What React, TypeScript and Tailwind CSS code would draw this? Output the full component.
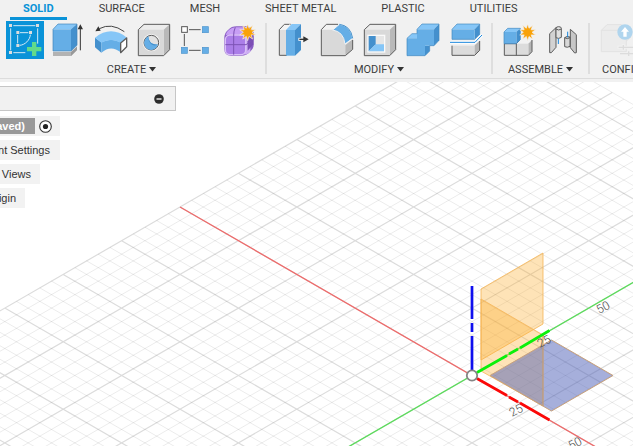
import type { ReactNode } from "react";

const tabs = ["SOLID", "SURFACE", "MESH", "SHEET METAL", "PLASTIC", "UTILITIES"];

const BLUE = "#65aee6";
const BLUE_TOP = "#86c6f7";
const BLUE_SIDE = "#4490cd";
const LINE = "#5c5c5c";

function Icon({ children }: { children: ReactNode }) {
  return (
    <svg viewBox="0 0 114 114" className="size-[38px]" aria-hidden="true">
      {children}
    </svg>
  );
}

function Star() {
  const points = Array.from({ length: 20 }, (_, i) => {
    const r = i % 2 === 0 ? 25 : 13;
    const a = (i * Math.PI) / 10 - Math.PI / 2;
    return `${80 + r * Math.cos(a)},${34 + r * Math.sin(a)}`;
  }).join(" ");
  return <polygon points={points} fill="#f9a209" stroke="#f1f1f1" strokeWidth="2" />;
}

function GrayBox() {
  return (
    <g stroke={LINE} strokeWidth="3" strokeLinejoin="round">
      <path d="M10 26 27 10H104L86 26Z" fill="#ececec" stroke="none" />
      <path d="M86 26 104 10V86L86 104Z" fill="#b9b9b9" stroke="none" />
      <path d="M10 26H86V104H10Z" fill="#d9d9d9" stroke="none" />
      <path d="M10 26 27 10H104V86L86 104H10Z" fill="none" />
    </g>
  );
}

const sketch = (
  <Icon>
    <rect width="114" height="114" fill="#0a93d8" />
    <g fill="none" stroke="#d5eaf6" strokeWidth="3">
      <path d="M22 14H88M14 22V88M95 22V68M22 95H58M42 35H67M35 42V67M73 41C72 57 57 72 41 73" />
    </g>
    <g fill="#dcdcdc">
      <rect x="9" y="9" width="9" height="9" />
      <rect x="90" y="9" width="9" height="9" />
      <rect x="9" y="90" width="9" height="9" />
      <rect x="31" y="30" width="9" height="9" />
      <rect x="69" y="30" width="9" height="9" />
      <rect x="31" y="69" width="9" height="9" />
    </g>
    <path d="M78 63H91V78H106V91H91V105H78V91H63V78H78Z" fill="#62da8b" />
  </Icon>
);

const extrude = (
  <Icon>
    <path d="M12 93H66L84 77V87L66 105H12Z" fill="#b3b3b3" />
    <path d="M66 93 84 77V87L66 105Z" fill="#999" />
    <path d="M12 25 27 9H84L66 25Z" fill={BLUE_TOP} />
    <path d="M66 25 84 9V73L66 90Z" fill={BLUE_SIDE} />
    <path d="M12 25H66V90H12Z" fill={BLUE} />
    <path d="M12 90V25L27 9H84V73L66 90Z" fill="none" stroke="#3f83b9" strokeWidth="2" />
    <path d="M94 20V88" stroke="#333" strokeWidth="3" />
    <path d="M94 10 102 25H86Z" fill="#333" />
  </Icon>
);

const revolve = (
  <Icon>
    <path d="M9 50 28 64V95L9 79Z" fill={BLUE_SIDE} />
    <path d="M28 64Q57 48 86 64V94Q57 70 28 95Z" fill={BLUE} />
    <path d="M9 50Q57 12 105 50L86 65Q57 49 28 65Z" fill={BLUE_TOP} />
    <path d="M86 66 104 51V77L86 95Z" fill="#fff" stroke={LINE} strokeWidth="4" strokeLinejoin="round" />
    <path d="M97 32Q58 4 22 23" fill="none" stroke="#444" strokeWidth="3" />
    <path d="M10 31 19 16 26 29Z" fill="#333" />
  </Icon>
);

const hole = (
  <Icon>
    <GrayBox />
    <circle cx="49" cy="65" r="26" fill="#f4f4f4" />
    <circle cx="49" cy="65" r="22" fill="#e2e2e2" stroke={LINE} strokeWidth="3" />
    <path d="M41 46C40 63 52 73 69 70A21 21 0 1 1 41 46Z" fill={BLUE} />
    <path d="M41 46C40 63 52 73 69 70C57 79 37 68 41 46Z" fill={BLUE_SIDE} />
  </Icon>
);

const pattern = (
  <Icon>
    <path d="M33 26H68M19 39V75M33 88H68" stroke="#555" strokeWidth="3" />
    <rect x="11" y="17" width="17" height="17" fill="#fff" stroke="#555" strokeWidth="3" />
    <g fill={BLUE} stroke="#4b94cd" strokeWidth="2">
      <rect x="73" y="17" width="18" height="18" />
      <rect x="10" y="79" width="18" height="18" />
      <rect x="73" y="79" width="18" height="18" />
    </g>
  </Icon>
);

const form = (
  <Icon>
    <path d="M10 48Q11 35 22 26Q32 15 50 16H78Q98 22 98 42V72Q98 83 87 92Q77 104 60 104H30Q10 104 10 84Z" fill="#8b5fc4" />
    <path d="M14 42Q20 22 44 19H76L88 31Q76 38 70 41H22Z" fill="#c79ef5" />
    <path d="M70 42 88 27V92Q80 100 70 101Z" fill="#cdaef3" />
    <path d="M79 47 97 32V70L80 89Z" fill="#7c4eb5" />
    <rect x="13" y="42" width="61" height="59" rx="14" fill="#ab7ee8" stroke="#d9bff8" strokeWidth="4" />
    <path d="M43 19Q38 30 38 42V101M13 71H75L97 56" fill="none" stroke="#7d54b5" strokeWidth="3" />
    <Star />
  </Icon>
);

const pressPull = (
  <Icon>
    <path d="M13 26H33V103H13Z" fill="#dedede" />
    <path d="M13 26 28 10H46L33 26Z" fill="#f4f4f4" />
    <path d="M36 103H13V26L28 10H48" fill="none" stroke={LINE} strokeWidth="3" />
    <path d="M31 26 47 8" stroke="#f4f4f4" strokeWidth="3" />
    <path d="M33 27 50 9H78L60 27Z" fill={BLUE_TOP} />
    <path d="M60 27 78 9V87L60 104Z" fill={BLUE_SIDE} />
    <path d="M33 27H60V104H33Z" fill={BLUE} />
    <path d="M70 55H92" stroke="#f4f4f4" strokeWidth="9" />
    <path d="M73 55H92" stroke="#333" strokeWidth="4" />
    <path d="M85 46 101 55 85 64Z" fill="#333" />
  </Icon>
);

const fillet = (
  <Icon>
    <path d="M10 26 25 10H62L45 26Z" fill="#f2f2f2" />
    <path d="M10 26H43Q78 30 82 68V104H10Z" fill="#d9d9d9" />
    <path d="M82 72 104 55V84L82 104Z" fill="#b9b9b9" />
    <path d="M60 10H25L10 26V104H82L104 85V57" fill="none" stroke={LINE} strokeWidth="3" />
    <path d="M44 27 64 10Q98 14 104 52L81 69Q77 32 44 27Z" fill={BLUE} stroke="#f2f2f2" strokeWidth="3" />
    <path d="M64 10Q98 14 104 52" fill="none" stroke="#4b94cd" strokeWidth="3" />
  </Icon>
);

const shell = (
  <Icon>
    <GrayBox />
    <rect x="19" y="41" width="54" height="54" fill="#fafafa" />
    <rect x="23" y="45" width="46" height="46" fill="#e6e6e6" />
    <path d="M23 45H44V70L23 91Z" fill={BLUE_SIDE} />
    <path d="M44 70H69V91H23Z" fill={BLUE_TOP} />
  </Icon>
);

const combine = (
  <Icon>
    <path d="M39 25 54 9H105L90 25Z" fill={BLUE_TOP} />
    <path d="M90 25 105 9V58L90 74Z" fill={BLUE_SIDE} />
    <path d="M9 52 24 38H44V52Z" fill={BLUE_TOP} />
    <path d="M63 74H77V90L63 104Z" fill={BLUE_SIDE} />
    <path d="M39 25H90V74H63V104H9V52H39Z" fill={BLUE} />
    <path d="M39 38V25L54 9H105V58L90 74H77V90L63 104H9V52L24 38Z" fill="none" stroke="#4188bf" strokeWidth="2" />
  </Icon>
);

const split = (
  <Icon>
    <path d="M15 74H83V103H15Z" fill="#dcdcdc" />
    <path d="M83 73 98 59V88L83 103Z" fill="#b5b5b5" />
    <path d="M15 74V103H83L98 88V60" fill="none" stroke={LINE} strokeWidth="3" />
    <path d="M15 25 30 9H98L83 25Z" fill={BLUE_TOP} />
    <path d="M83 25 98 9V40L83 55Z" fill={BLUE_SIDE} />
    <path d="M15 25H83V55H15Z" fill={BLUE} />
    <path d="M15 55V25L30 9H98V40L83 55Z" fill="none" stroke="#4188bf" strokeWidth="2" />
    <path d="M9 64H84L105 42" fill="none" stroke="#fff" strokeWidth="8" />
    <path d="M9 64H84L105 42" fill="none" stroke="#1b87dc" strokeWidth="3" />
  </Icon>
);

const newComponent = (
  <Icon>
    <path d="M46 68 57 57H93L82 68Z" fill="#f2f2f2" />
    <path d="M82 68 93 57V92L82 103Z" fill="#b5b5b5" />
    <path d="M10 68H82V103H10Z" fill="#dcdcdc" />
    <path d="M10 68V103H82L93 92V57M46 68V103M10 68H46L55 58" fill="none" stroke={LINE} strokeWidth="3" />
    <path d="M9 33 20 22H58L46 33Z" fill={BLUE_TOP} />
    <path d="M46 33 58 22V56L46 68Z" fill={BLUE_SIDE} />
    <path d="M9 33H46V68H9Z" fill={BLUE} />
    <path d="M9 68V33L20 22H58V56L46 68Z" fill="none" stroke="#4188bf" strokeWidth="2" />
    <Star />
  </Icon>
);

const joint = (
  <Icon>
    <g stroke={LINE} strokeWidth="3" strokeLinejoin="round">
      <path d="M17 38 36 20V79L22 95H17Z" fill="#d2d2d2" />
      <path d="M36 22Q36 17 44 17Q52 17 52 22V49Q44 55 36 50Z" fill="#e0e0e0" />
      <path d="M36 24Q44 30 52 24" fill="none" />
      <path d="M79 45V25L97 41V95L92 96 79 80Z" fill="#c6c6c6" />
      <path d="M62 50Q68 44 78 48V76Q70 81 62 77Z" fill="#d8d8d8" />
      <path d="M62 50Q70 56 78 50" fill="none" />
    </g>
    <path d="M43 53V69M71 32V49" stroke="#1b87dc" strokeWidth="3" />
  </Icon>
);

const configure = (
  <Icon>
    <g fill="#ececec" stroke="#e2e2e2" strokeWidth="3">
      <path d="M10 92V28L27 11H70L85 28V92Z" />
      <path d="M10 28H62M85 60 100 47" />
    </g>
    <path d="M58 79H114M66 98H114M76 70V88M92 89V107" stroke="#f1f1f1" strokeWidth="9" />
    <path d="M62 79H114M66 98H114M76 72V86M92 91V105" stroke="#dcdcdc" strokeWidth="4" />
    <circle cx="81" cy="33" r="23" fill="#b0d5ee" />
    <path d="M81 18 93 32H86V47H76V32H69Z" fill="#fff" />
  </Icon>
);

type Tool = { name: string; icon: ReactNode; disabled?: boolean };

const groups: { label: string; caret: boolean; tools: Tool[] }[] = [
  {
    label: "CREATE",
    caret: true,
    tools: [
      { name: "Create sketch", icon: sketch },
      { name: "Extrude", icon: extrude },
      { name: "Revolve", icon: revolve },
      { name: "Hole", icon: hole },
      { name: "Rectangular pattern", icon: pattern },
      { name: "Create form", icon: form },
    ],
  },
  {
    label: "MODIFY",
    caret: true,
    tools: [
      { name: "Press pull", icon: pressPull },
      { name: "Fillet", icon: fillet },
      { name: "Shell", icon: shell },
      { name: "Combine", icon: combine },
      { name: "Split body", icon: split },
    ],
  },
  {
    label: "ASSEMBLE",
    caret: true,
    tools: [
      { name: "New component", icon: newComponent },
      { name: "Joint", icon: joint },
    ],
  },
  {
    label: "CONFI",
    caret: false,
    tools: [{ name: "Configure", icon: configure, disabled: true }],
  },
];

function Ribbon() {
  return (
    <header className="bg-[#f1f1f1] pb-[3px] font-['Roboto',sans-serif] text-[11px] text-[#3c3c3c]">
      <nav className="flex h-[21px] gap-[19px] pl-[10px]">
        {tabs.map((tab, i) => (
          <button
            key={tab}
            className={
              i === 0
                ? "h-5 border-b-3 border-[#0a93d8] px-[13px] text-[11px] leading-4 font-bold whitespace-nowrap text-[#0a93d8]"
                : "h-5 border-b-3 border-transparent px-[13px] text-[11px] leading-4 whitespace-nowrap"
            }
          >
            {tab}
          </button>
        ))}
      </nav>
      <div className="flex h-[58px] border-b border-[#dcdcdc] pl-1.5">
        {groups.map((group, i) => (
          <div key={group.label} className="flex shrink-0">
            <div className="flex flex-col">
              <div className="flex gap-[5px]">
                {group.tools.map((tool) => (
                  <button key={tool.name} aria-label={tool.name} disabled={tool.disabled}>
                    {tool.icon}
                  </button>
                ))}
              </div>
              <button
                className={
                  group.caret
                    ? "flex h-5 items-center justify-center gap-[3px] pt-0.5 pr-0.5 leading-4"
                    : "flex h-5 w-[38px] items-center pt-0.5 pl-1 leading-4"
                }
              >
                {group.label}
                {group.caret && (
                  <svg viewBox="0 0 7 5" className="h-[5px] w-[7px]" aria-hidden="true">
                    <path d="M0 0H7L3.5 4.5Z" fill="#333" />
                  </svg>
                )}
              </button>
            </div>
            {i < groups.length - 1 && <div className="mt-0.5 mr-2 ml-1.5 h-[51px] w-0.5 bg-[#dedede]" />}
          </div>
        ))}
      </div>
    </header>
  );
}

// Isometric floor grid: U runs along the green axis, V along the red one.
const OX = 472;
const OY = 293.5;
const CX = 58.4;
const CY = 33.7;
const U_MIN = -12;
const U_MAX = 5.4;
const V_MIN = -5;
const V_MAX = 12;

function at(u: number, v: number) {
  return `${(OX + (u + v) * CX).toFixed(1)} ${(OY + (v - u) * CY).toFixed(1)}`;
}

function gridPaths() {
  let minor = "";
  let major = "";
  for (let k = U_MIN * 5; k <= U_MAX * 5; k++) {
    const line = `M${at(k / 5, V_MIN)}L${at(k / 5, V_MAX)}`;
    if (k % 5 === 0) major += line;
    else minor += line;
  }
  for (let k = V_MIN * 5; k <= V_MAX * 5; k++) {
    const line = `M${at(U_MIN, k / 5)}L${at(U_MAX, k / 5)}`;
    if (k % 5 === 0) major += line;
    else minor += line;
  }
  return { minor, major };
}

function Viewport() {
  const { minor, major } = gridPaths();
  return (
    <svg className="absolute inset-0 h-full w-full" aria-hidden="true">
      <path d={minor} stroke="#000" strokeOpacity="0.08" fill="none" />
      <path d={major} stroke="#000" strokeOpacity="0.14" strokeWidth="1.2" fill="none" />
      <path d={`M${at(0, V_MIN)}L${at(0, V_MAX)}`} stroke="#ee6a6a" strokeWidth="1.3" />
      <path d={`M${at(U_MIN, 0)}L${at(U_MAX, 0)}`} stroke="#5bdc5b" strokeWidth="1.3" />

      <g fill="#fbaf32" fillOpacity="0.35" stroke="#f5b455" strokeOpacity="0.8">
        <path d="M481 207 543 171V242L481 278Z" />
        <path d="M481 217 543 253V324L481 289Z" />
      </g>
      <path d="M490 293.5 551.5 258 613 293.5 551.5 329Z" fill="#4d5fb8" fillOpacity="0.5" stroke="#c9a27c" />
      <path d="M543 253V324" stroke="#dba766" strokeOpacity="0.8" />

      <g className="font-['Roboto',sans-serif] text-[12px] font-light" fill="#444" textAnchor="middle">
        <text transform="translate(546 263) rotate(-28)">25</text>
        <text transform="translate(605 229) rotate(-28)">50</text>
        <text transform="translate(518 332) rotate(-28)">25</text>
        <text transform="translate(577 365) rotate(-28)">50</text>
      </g>

      <g strokeWidth="2.7">
        <path d="M472 204V237M472 241V250M472 254V289" stroke="#0f0fee" />
        <path d="M477 290.5 507 273.5M509 272 518 267M520 266 549.5 248.5" stroke="#0bf00b" />
        <path d="M477 296.5 507 313.5M509 315 518 320M520 321 549.5 338" stroke="#fb0808" />
      </g>
      <circle cx="472" cy="293.5" r="5.2" fill="#fff" stroke="#858585" strokeWidth="1.8" />
    </svg>
  );
}

function Browser() {
  return (
    <aside className="relative flex flex-col items-start gap-1 pt-1 font-['Liberation_Sans',sans-serif] text-[11px] leading-4 text-[#333]">
      <div className="mb-px flex h-[25px] w-44 items-center justify-end border border-l-0 border-[#c6c6c6] bg-[#f1f1f1] pr-[11px]">
        <button aria-label="Collapse">
          <svg viewBox="0 0 10 10" className="block size-2.5" aria-hidden="true">
            <circle cx="5" cy="5" r="4.8" fill="#2d2d2d" />
            <path d="M2.5 5H7.5" stroke="#fff" strokeWidth="1.3" />
          </svg>
        </button>
      </div>
      <div className="flex h-5 w-15 items-center gap-1 bg-[#f2f2f2]">
        <button className="flex h-4 w-[35px] items-center justify-end bg-[#999] pr-[10px] font-bold text-white">
          aved)
        </button>
        <button aria-label="Activate component">
          <svg viewBox="0 0 13 13" className="block size-[13px]" aria-hidden="true">
            <circle cx="6.5" cy="6.5" r="5.8" fill="#fff" stroke="#333" strokeWidth="1.1" />
            <circle cx="6.5" cy="6.5" r="2.6" fill="#222" />
          </svg>
        </button>
      </div>
      <button className="flex h-5 w-15 items-center justify-end bg-[#f2f2f2] pr-[10px] whitespace-nowrap">
        nt Settings
      </button>
      <button className="flex h-5 w-10 items-center justify-end bg-[#f2f2f2] pr-[9px]">Views</button>
      <button className="flex h-5 w-[25px] items-center justify-end bg-[#f2f2f2] pr-[9px]">igin</button>
    </aside>
  );
}

export default function App() {
  return (
    <div className="flex min-h-screen flex-col overflow-hidden bg-white">
      <Ribbon />
      <main className="relative flex-1">
        <Viewport />
        <Browser />
      </main>
    </div>
  );
}
